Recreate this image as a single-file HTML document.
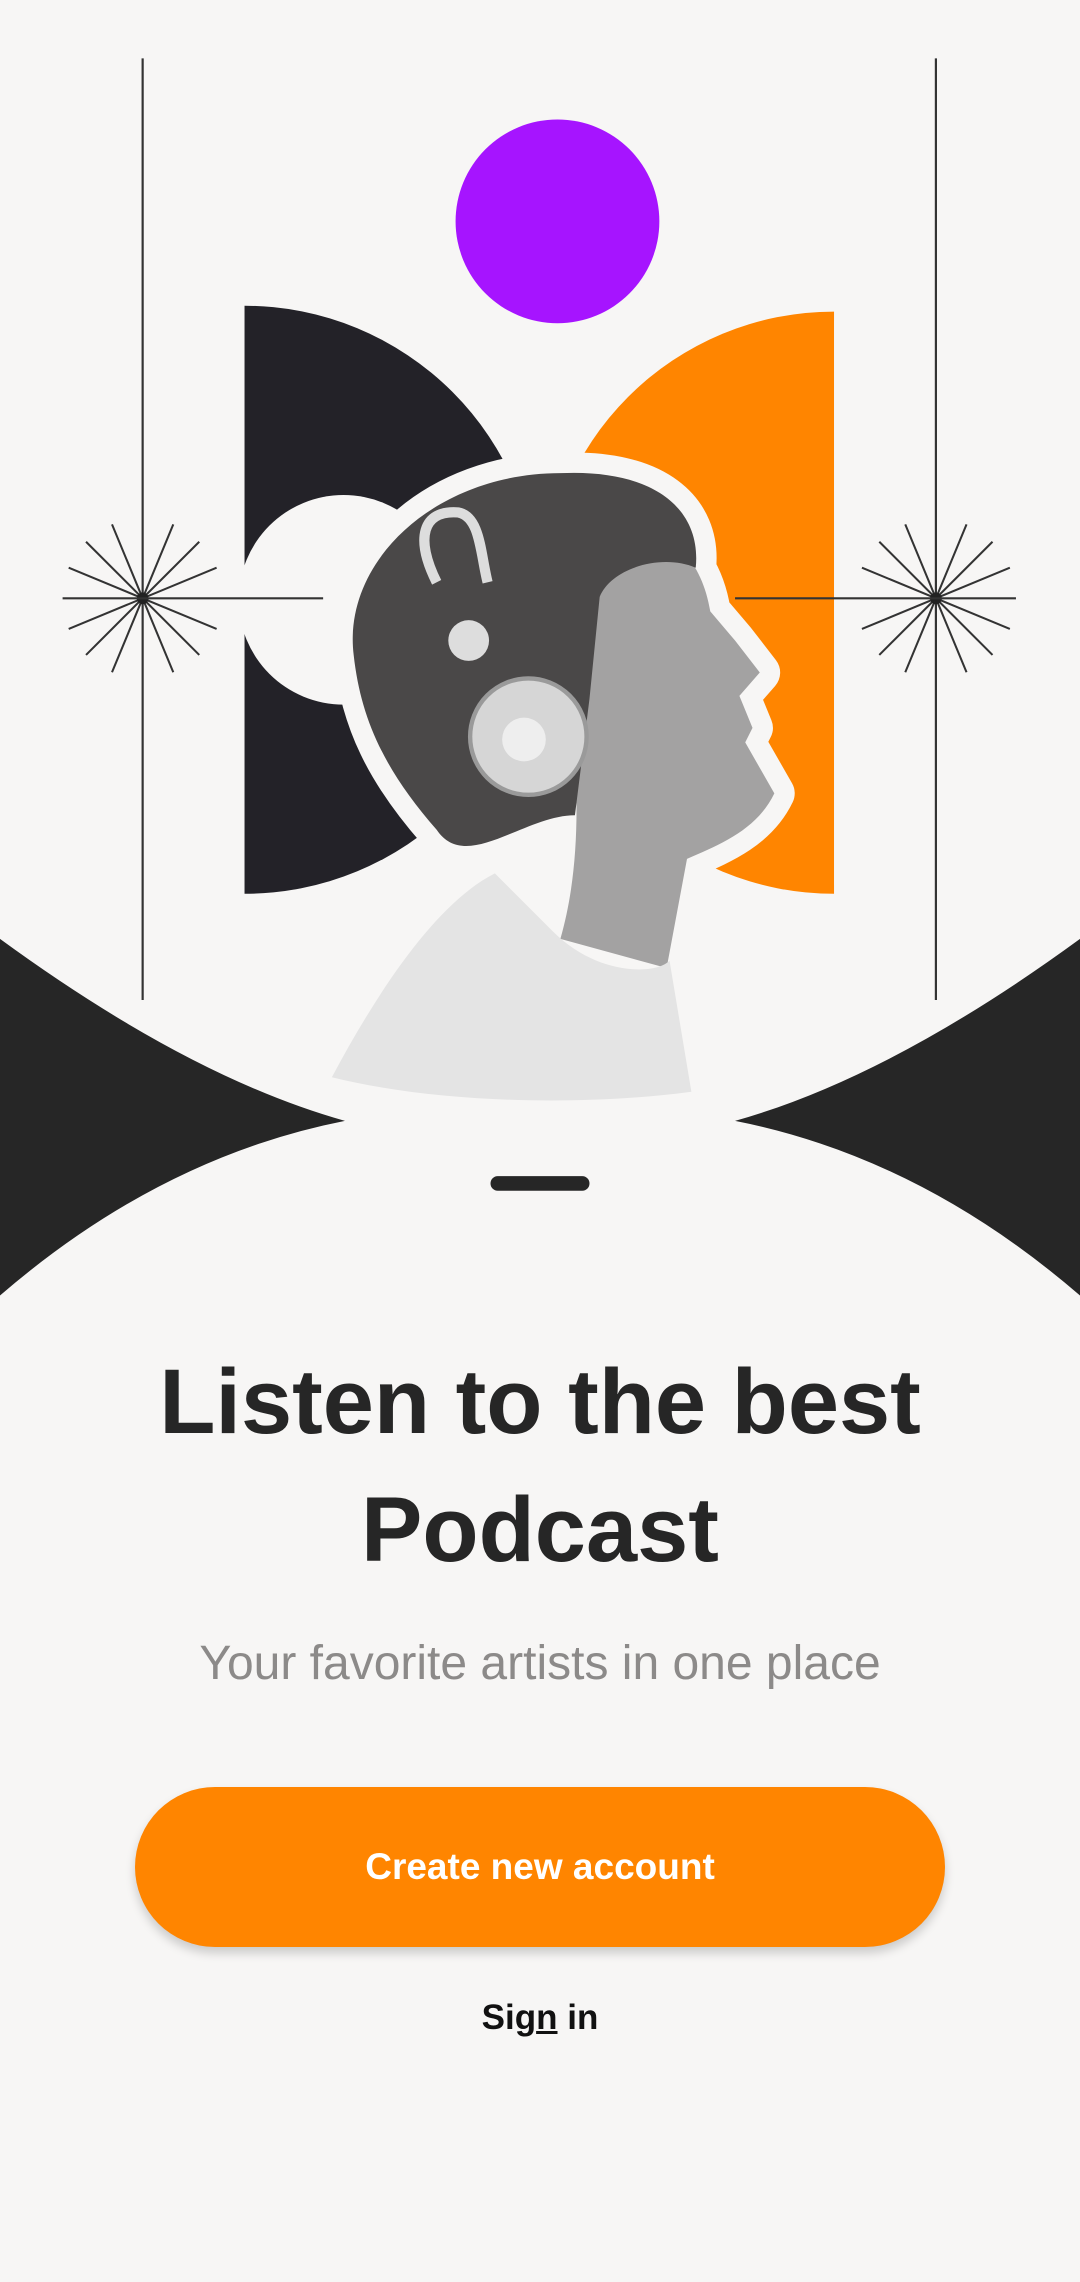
<!DOCTYPE html>
<html><head><meta charset="utf-8"><style>
html,body{margin:0;padding:0;background:#f7f6f5;}
body{width:1080px;height:2282px;position:relative;overflow:hidden;font-family:"Liberation Sans",sans-serif;}
svg{position:absolute;left:0;top:0;}
.t{position:absolute;left:0;width:1080px;text-align:center;}
h1{position:absolute;top:1338px;left:0;width:1080px;margin:0;text-align:center;font-size:92px;line-height:128px;font-weight:700;color:#262626;}
.sub{top:1636px;font-size:48px;color:#8c8a89;}
.btn{position:absolute;left:135px;top:1787px;width:810px;height:160px;border-radius:80px;background:#ff8500;color:#fff;font-size:37px;font-weight:700;line-height:160px;text-align:center;box-shadow:0 6px 10px rgba(0,0,0,.18);}
.sign{top:1998px;font-size:35px;font-weight:700;color:#111;}
</style></head><body>
<svg width="1080" height="1300" viewBox="0 0 742 893">
<defs>
<g id="person">
<path d="M400,360 C440,350 480,370 488,420 L505,440 L522,462 L508,478 L517,500 L512,510 L532,545 C520,570 495,580 472,590 L458,665 L385,645 C395,610 398,570 395,520 Z"/>
<path d="M243,450 C235,385 300,325 385,325 C450,322 482,350 478,390 C455,380 420,390 412,410 L405,480 L395,560 C360,560 320,600 300,570 C265,530 248,495 243,450Z"/>
<path d="M228,740 C260,680 300,620 340,600 L380,640 C410,670 450,670 460,660 L475,750 C400,760 300,758 228,740Z"/>
</g>
</defs>
<line x1="98" y1="40" x2="98" y2="687" stroke="#333" stroke-width="1.5"/>
<line x1="643" y1="40" x2="643" y2="687" stroke="#333" stroke-width="1.5"/>
<g stroke="#333" stroke-width="1.4">
<g transform="translate(98,411)">
<line x1="-55" y1="0" x2="55" y2="0" transform="rotate(22.5)"/><line x1="-55" y1="0" x2="55" y2="0" transform="rotate(45)"/><line x1="-55" y1="0" x2="55" y2="0" transform="rotate(67.5)"/><line x1="-55" y1="0" x2="55" y2="0" transform="rotate(112.5)"/><line x1="-55" y1="0" x2="55" y2="0" transform="rotate(135)"/><line x1="-55" y1="0" x2="55" y2="0" transform="rotate(157.5)"/>
<circle r="4" fill="#222" stroke="none"/></g>
<g transform="translate(643,411)">
<line x1="-55" y1="0" x2="55" y2="0" transform="rotate(22.5)"/><line x1="-55" y1="0" x2="55" y2="0" transform="rotate(45)"/><line x1="-55" y1="0" x2="55" y2="0" transform="rotate(67.5)"/><line x1="-55" y1="0" x2="55" y2="0" transform="rotate(112.5)"/><line x1="-55" y1="0" x2="55" y2="0" transform="rotate(135)"/><line x1="-55" y1="0" x2="55" y2="0" transform="rotate(157.5)"/>
<circle r="4" fill="#222" stroke="none"/></g>
</g>
<circle cx="383" cy="152" r="70" fill="#a614ff"/>
<path d="M168,210 A202,202 0 0 1 168,614 Z" fill="#232228"/>
<path d="M573,214 A200,200 0 0 0 573,614 Z" fill="#ff8500"/>
<circle cx="236" cy="412" r="72" fill="#f7f6f5"/>
<use href="#person" fill="#f7f6f5" stroke="#f7f6f5" stroke-width="28" stroke-linejoin="round"/>
<line x1="43" y1="411" x2="222" y2="411" stroke="#333" stroke-width="1.5"/>
<line x1="505" y1="411" x2="698" y2="411" stroke="#333" stroke-width="1.5"/>
<g>
<path d="M400,360 C440,350 480,370 488,420 L505,440 L522,462 L508,478 L517,500 L512,510 L532,545 C520,570 495,580 472,590 L458,665 L385,645 C395,610 398,570 395,520 Z" fill="#a3a2a2"/>
<path d="M243,450 C235,385 300,325 385,325 C450,322 482,350 478,390 C455,380 420,390 412,410 L405,480 L395,560 C360,560 320,600 300,570 C265,530 248,495 243,450Z" fill="#4a4848"/>
<path d="M228,740 C260,680 300,620 340,600 L380,640 C410,670 450,670 460,660 L475,750 C400,760 300,758 228,740Z" fill="#e4e4e4"/>
<path d="M300,400 C285,370 290,350 315,352 C330,355 330,380 335,400" fill="none" stroke="#ddd" stroke-width="7"/>
<circle cx="322" cy="440" r="14" fill="#ddd"/>
<circle cx="363" cy="506" r="40" fill="#d6d6d6" stroke="#9a9a9a" stroke-width="3"/>
<circle cx="360" cy="508" r="15" fill="#eee"/>
</g>
<path d="M0,645 Q130,740 237,770 Q110,795 0,890Z" fill="#262626"/>
<path d="M742,645 Q612,740 505,770 Q632,795 742,890Z" fill="#262626"/>
<rect x="337" y="808" width="68" height="10" rx="5" fill="#262626"/>
</svg>
<h1>Listen to the best<br>Podcast</h1>
<div class="t sub">Your favorite artists in one place</div>
<div class="btn">Create new account</div>
<div class="t sign">Sig<u>n</u> in</div>
</body></html>
